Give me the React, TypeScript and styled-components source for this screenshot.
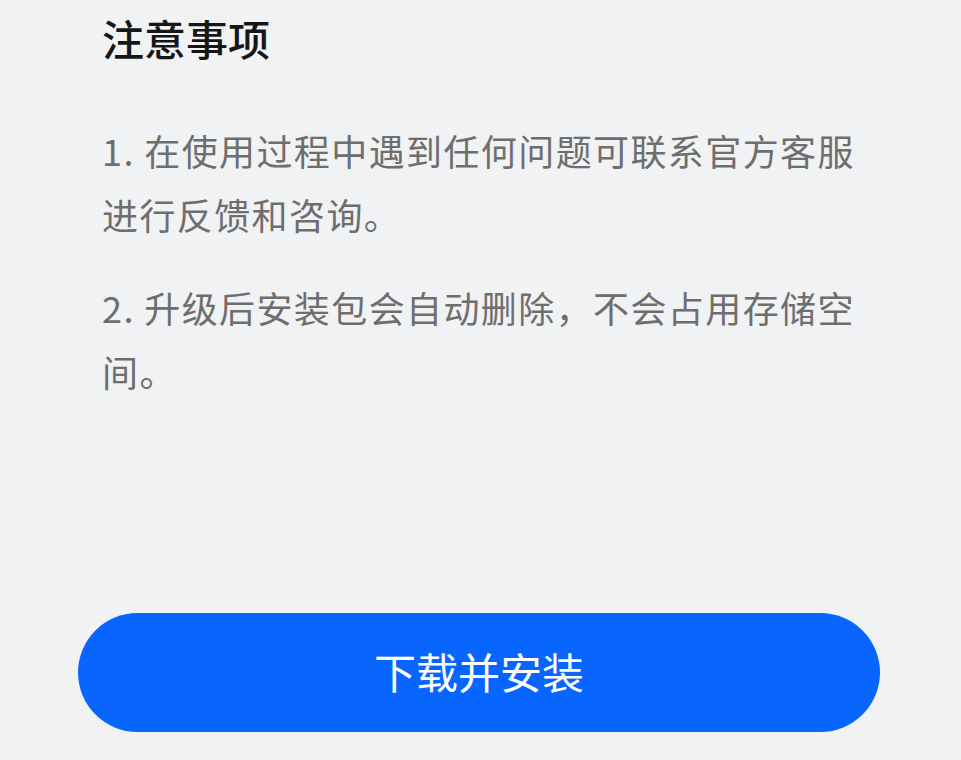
import React from "react";
import styled, { createGlobalStyle } from "styled-components";

const Global = createGlobalStyle`
  html, body {
    margin: 0;
    padding: 0;
    background: #f1f2f4;
    font-family: "Noto Sans CJK SC", "Noto Sans", sans-serif;
  }
`;

const Page = styled.div`
  box-sizing: border-box;
  height: 760px;
  display: flex;
  flex-direction: column;
  background: #f1f2f4;
  overflow: hidden;
`;

const Content = styled.div`
  padding: 8px 102px 0 102px;
`;

const Title = styled.h2`
  margin: 0;
  font-size: 42px;
  line-height: 60px;
  font-weight: 500;
  color: #161616;
`;

const NoteList = styled.div`
  margin-top: 50px;
  display: flex;
  flex-direction: column;
  gap: 29px;
`;

const Note = styled.p`
  margin: 0;
  font-size: 36px;
  line-height: 64px;
  letter-spacing: 1.4px;
  color: #6e6e6e;
`;

const Footer = styled.div`
  margin-top: auto;
  padding: 0 81px 28px 78px;
`;

const PrimaryButton = styled.button`
  width: 100%;
  height: 119px;
  border: none;
  border-radius: 60px;
  background: #0866ff;
  color: #ffffff;
  font-family: "Noto Sans CJK SC", "Noto Sans", sans-serif;
  font-size: 42px;
  font-weight: 400;
  padding: 0 0 5px 0;
  cursor: pointer;
  display: flex;
  align-items: center;
  justify-content: center;
`;

const notes = [
  "1. 在使用过程中遇到任何问题可联系官方客服进行反馈和咨询。",
  "2. 升级后安装包会自动删除，不会占用存储空间。",
];

export default function App() {
  return (
    <Page>
      <Global />
      <Content>
        <Title>注意事项</Title>
        <NoteList>
          {notes.map((n) => (
            <Note key={n}>{n}</Note>
          ))}
        </NoteList>
      </Content>
      <Footer>
        <PrimaryButton>下载并安装</PrimaryButton>
      </Footer>
    </Page>
  );
}
